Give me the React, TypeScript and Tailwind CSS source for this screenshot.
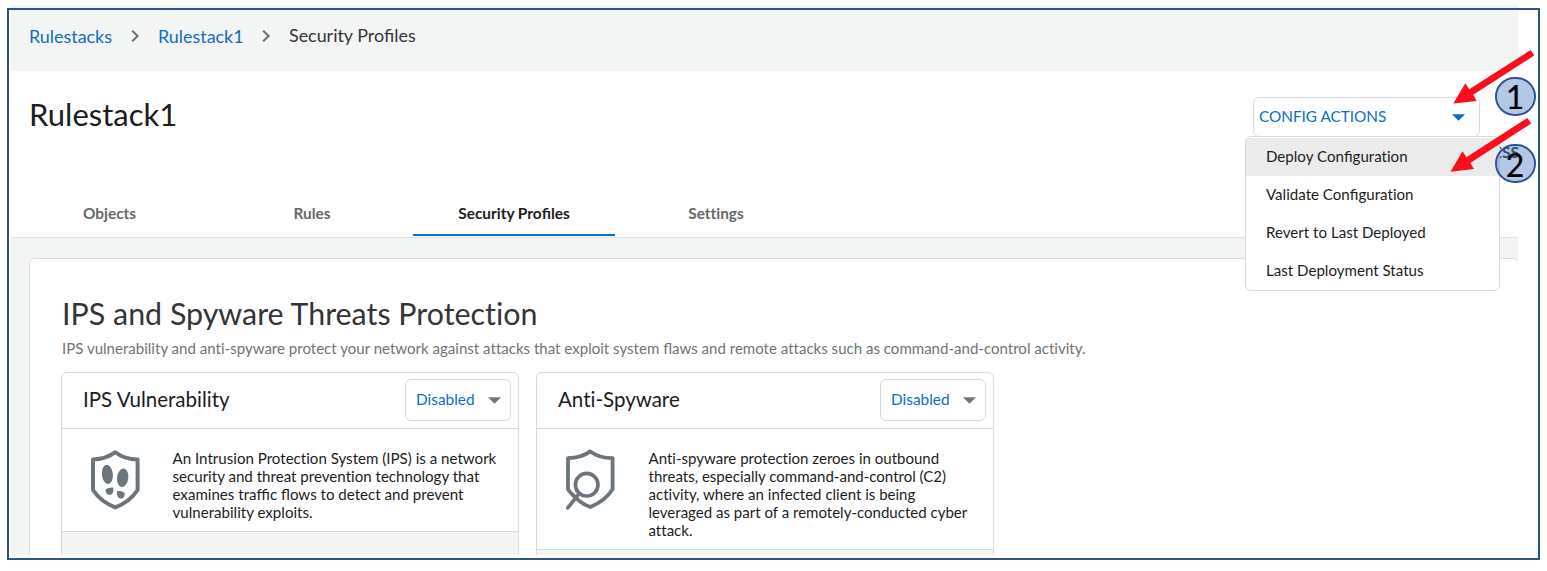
import type { ReactNode } from "react";

const MENU_ITEMS = [
  "Deploy Configuration",
  "Validate Configuration",
  "Revert to Last Deployed",
  "Last Deployment Status",
];

const TABS = ["Objects", "Rules", "Security Profiles", "Settings"];

// Joins only the f-ligatures; Lato's "ti" and "tt" ligatures stay off.
function T({ children }: { children: string }) {
  return (
    <span className="[font-variant-ligatures:none]">
      {children.split(/(ffi|fi|fl)/).map((part, i) =>
        i % 2 === 1 ? (
          <span key={i} className="[font-variant-ligatures:common-ligatures]">
            {part}
          </span>
        ) : (
          part
        ),
      )}
    </span>
  );
}

function Chevron({ className }: { className: string }) {
  return (
    <svg className={className} width="10" height="14" viewBox="0 0 10 14" fill="none">
      <path d="M2.2 1.8 7.6 7 2.2 12.2" stroke="#6b6f71" strokeWidth="2" />
    </svg>
  );
}

function Caret({ color, className }: { color: string; className: string }) {
  return (
    <svg className={className} width="13" height="7" viewBox="0 0 13 7">
      <path d="M0 0.3H13L6.5 6.7Z" fill={color} />
    </svg>
  );
}

function FootprintShield() {
  return (
    <svg width="52" height="62" viewBox="0 0 52 62" fill="none">
      <path
        d="M26.3 4.2C20.5 8.7 13 11.4 4 11.4V42C8.8 49.4 16.5 55.6 26.3 59.4C36 55.6 43.8 49.4 48.6 42V11.4C39.6 11.4 32 8.7 26.3 4.2Z"
        stroke="#6c757c"
        strokeWidth="4"
        strokeLinejoin="round"
      />
      <g fill="#6c757c" transform="translate(0 0.8)">
        <ellipse cx="18.4" cy="25.6" rx="5.5" ry="9.6" transform="rotate(-6 18.4 25.6)" />
        <ellipse cx="33.7" cy="29" rx="5.6" ry="9.3" transform="rotate(7 33.7 29)" />
        <path d="M16.7 40.6C18.8 39 21.8 38.3 24.3 38.7C24.8 43 23.8 46 20.8 46C18 46 16.2 43.4 16.7 40.6Z" />
        <path d="M28 42.3C30.8 42 33.4 42.6 35.6 44.2C35.9 47.5 34.4 49.7 31.9 49.7C28.8 49.7 27.5 46.5 28 42.3Z" />
      </g>
    </svg>
  );
}

function MagnifierShield() {
  return (
    <svg width="52" height="62" viewBox="0 0 52 62" fill="none" stroke="#6c757c">
      <path
        d="M14.6 52.4C18 55 22 57.6 26.3 59C36 55 43.8 48.6 48.6 41.2V10.2C39.6 10 32 7.7 26.3 3.4C20.5 7.7 13 10 4 10.2V41.2C6 44.6 9 47.2 14.6 52.4"
        strokeWidth="3.8"
        strokeLinejoin="round"
      />
      <circle cx="22.7" cy="36.7" r="11.3" strokeWidth="3.6" />
      <path d="M15.2 45.3 3.8 59.8" strokeWidth="3.7" strokeLinecap="round" />
    </svg>
  );
}

function ProfileCard({
  title,
  icon,
  lines,
  bodyClass,
  textClass,
}: {
  title: string;
  icon: ReactNode;
  lines: string[];
  bodyClass: string;
  textClass: string;
}) {
  return (
    <section className="flex h-[200px] w-[458px] flex-col rounded-t-md border border-[#dadbdb] bg-white">
      <header className="flex h-[56px] shrink-0 items-center justify-between border-b border-[#d8dada] pl-[21px] pr-[7px]">
        <h3 className="-mt-[3px] text-[20.5px] leading-6 text-[#1c1d1e]">
          <T>{title}</T>
        </h3>
        <button className="-mt-px flex h-[42px] w-[106px] items-center rounded-md border border-[#dadbdb] pl-[10px] text-[15.4px] text-[#0f6cc9]">
          Disabled
          <Caret color="#757575" className="ml-[13px] mt-px" />
        </button>
      </header>
      <div className={bodyClass}>
        <div className="w-[52px] shrink-0 pt-[19px]">{icon}</div>
        <p className={textClass}>
          {lines.map((line) => (
            <span key={line} className="block whitespace-nowrap">
              <T>{line}</T>
            </span>
          ))}
        </p>
      </div>
      <div className="grow bg-[#f3f5f4]" />
    </section>
  );
}

function StepBadge({ label, className }: { label: string; className: string }) {
  return (
    <div className={className}>
      <span>{label}</span>
    </div>
  );
}

export default function App() {
  return (
    <div className="relative h-[571px] w-[1547px] overflow-hidden bg-white font-['Lato',sans-serif] text-[#1c1d1e]">
      <div className="ml-[11px] flex h-[555px] w-[1507px] flex-col overflow-hidden pt-[5px]">
        <nav className="flex h-[66px] shrink-0 bg-[#f3f5f4] pl-[18px] pt-[19px] text-[17.9px] leading-6">
          <a className="w-[84px] whitespace-nowrap text-[#0f6cc9]">Rulestacks</a>
          <Chevron className="ml-[17px] mt-[5px]" />
          <a className="ml-[18px] w-[86px] whitespace-nowrap text-[#0f6cc9]">Rulestack1</a>
          <Chevron className="ml-[17px] mt-[5px]" />
          <span className="-mt-px ml-[18px] whitespace-nowrap text-[#333536]">
            <T>Security Profiles</T>
          </span>
        </nav>

        <div className="flex h-[121px] shrink-0 justify-between pl-[18px] pr-[38px]">
          <h1 className="pt-[25px] text-[31px] leading-9">Rulestack1</h1>
          <button className="mt-[26px] flex h-[40px] w-[227px] items-center justify-between rounded-md border border-[#dadbdb] pb-px pl-[5px] pr-[14px] text-[15.3px] text-[#0f6cc9]">
            CONFIG ACTIONS
            <Caret color="#0f6cc9" className="mt-px" />
          </button>
        </div>

        <div className="flex h-[46px] shrink-0 border-b border-[#e2e4e4] text-[15.4px] font-bold">
          {TABS.map((tab) => (
            <div
              key={tab}
              className={
                tab === "Security Profiles"
                  ? "mb-px flex w-[202px] justify-center border-b-2 border-[#0f6cc9] pt-[11px] leading-5 text-[#1c1d1e]"
                  : "flex w-[202px] justify-center pt-[11px] leading-5 text-[#66696b] first:w-[200px] first:pr-[3px]"
              }
            >
              <T>{tab}</T>
            </div>
          ))}
        </div>

        <div className="grow bg-[#f3f5f4] pl-[18px] pt-[20px]">
          <div className="h-[320px] w-[1490px] rounded-t-md border border-[#dadddd] bg-white pl-[31px] pt-[34px]">
            <h2 className="pl-px text-[30.4px] leading-10 text-[#333536]">
              <T>IPS and Spyware Threats Protection</T>
            </h2>
            <p className="mt-[5px] whitespace-nowrap pl-px text-[15.05px] leading-5 text-[#707374]">
              <T>
                IPS vulnerability and anti-spyware protect your network against attacks that exploit system flaws and
                remote attacks such as command-and-control activity.
              </T>
            </p>
            <div className="mt-[14px] flex gap-[17px]">
              <ProfileCard
                title="IPS Vulnerability"
                icon={<FootprintShield />}
                bodyClass="flex h-[103px] shrink-0 border-b border-[#d8dada] pl-[27px]"
                textClass="ml-[31.5px] pt-[20px] text-[15.1px] leading-[18px]"
                lines={[
                  "An Intrusion Protection System (IPS) is a network",
                  "security and threat prevention technology that",
                  "examines traffic flows to detect and prevent",
                  "vulnerability exploits.",
                ]}
              />
              <ProfileCard
                title="Anti-Spyware"
                icon={<MagnifierShield />}
                bodyClass="flex h-[121px] shrink-0 border-b border-[#d8dada] pl-[27px]"
                textClass="ml-[32.5px] pt-[20px] text-[15.04px] leading-[18px]"
                lines={[
                  "Anti-spyware protection zeroes in outbound",
                  "threats, especially command-and-control (C2)",
                  "activity, where an infected client is being",
                  "leveraged as part of a remotely-conducted cyber",
                  "attack.",
                ]}
              />
            </div>
          </div>
        </div>
      </div>

      <div className="pointer-events-none absolute left-[7px] top-[8px] h-[552px] w-[1533px] border-2 border-[#2f528f]" />

      <span className="absolute left-[1493px] top-[142px] text-[15.5px] font-bold leading-5 text-[#3c4248]">ESS</span>

      <ul className="absolute left-[1245px] top-[136px] h-[155px] w-[255px] overflow-hidden rounded-md border border-[#d9dada] bg-white text-[15.1px]">
        {MENU_ITEMS.map((item) => (
          <li key={item} className="flex h-[38px] items-center pb-[2px] pl-[20px] first:mt-px first:bg-[#ebebeb]">
            <T>{item}</T>
          </li>
        ))}
      </ul>

      <StepBadge
        label="1"
        className="absolute left-[1495px] top-[77px] flex h-[39px] w-[41px] items-center justify-center rounded-full border-2 border-[#2f528f] bg-[#285fbb]/35 bg-clip-padding pr-px text-[32px] leading-none text-black [-webkit-text-stroke:0.2px_black]"
      />
      <StepBadge
        label="2"
        className="absolute left-[1495px] top-[144px] flex h-[39px] w-[41px] items-center justify-center rounded-full border-2 border-[#2f528f] bg-[#285fbb]/35 bg-clip-padding pr-px pt-[3px] text-[32px] leading-none text-black [-webkit-text-stroke:0.2px_black]"
      />

      <svg
        className="pointer-events-none absolute left-[1440px] top-[40px]"
        width="107"
        height="140"
        viewBox="1440 40 107 140"
        fill="#fc0d1b"
      >
        <path d="M1530.5 50 1534.3 55.5 1473.2 94.8 1476.7 101 1453.3 103.5 1465.3 83.3 1469.3 89.2Z" />
        <path d="M1527.3 118 1531.2 123.5 1470.3 162.9 1474 169 1450.5 171.7 1462.5 151.3 1466.4 157.3Z" />
      </svg>
    </div>
  );
}
